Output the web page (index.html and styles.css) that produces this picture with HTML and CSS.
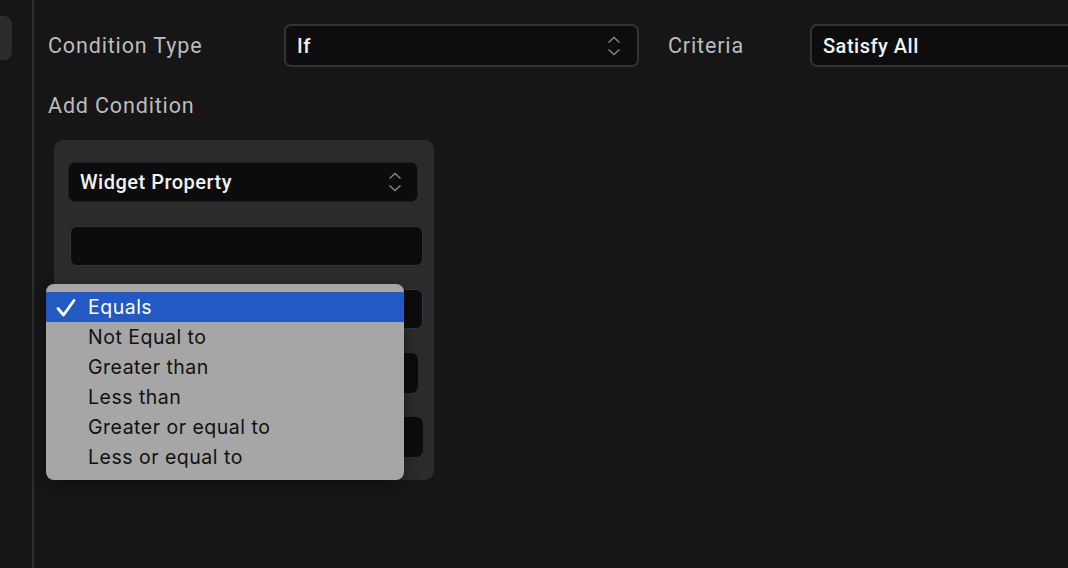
FILE: index.html
```html
<!DOCTYPE html>
<html>
<head>
<meta charset="utf-8">
<link rel="stylesheet" href="styles.css">
</head>
<body>
<div class="app">
  <aside class="sidebar">
    <div class="side-tab"></div>
  </aside>
  <main class="content">
    <div class="row">
      <span class="label label-type">Condition Type</span>
      <div class="select select-if">
        <span class="val">If</span>
        <svg class="chev" width="14" height="20" viewBox="0 0 14 20"><path d="M1.5 6.5 L7 1.5 L12.5 6.5 M1.5 13.5 L7 18.5 L12.5 13.5" fill="none" stroke="#8a8a8a" stroke-width="1.3"/></svg>
      </div>
      <span class="label label-crit">Criteria</span>
      <div class="select select-crit">
        <span class="val">Satisfy All</span>
      </div>
    </div>
    <div class="label add">Add Condition</div>
    <div class="card-wrap">
      <div class="card">
        <div class="field f1">
          <span class="val">Widget Property</span>
          <svg class="chev" width="14" height="20" viewBox="0 0 14 20"><path d="M1.5 6.5 L7 1.5 L12.5 6.5 M1.5 13.5 L7 18.5 L12.5 13.5" fill="none" stroke="#8a8a8a" stroke-width="1.3"/></svg>
        </div>
        <div class="field f2"></div>
        <div class="field f3"></div>
        <div class="field f4"></div>
        <div class="field f5"></div>
      </div>
      <ul class="menu">
        <li class="item sel"><svg class="check" width="20" height="18" viewBox="0 0 20 18"><path d="M2 9.5 L7.5 16 L18 1.5" fill="none" stroke="#fff" stroke-width="2.8" stroke-linecap="round" stroke-linejoin="round"/></svg>Equals</li>
        <li class="item">Not Equal to</li>
        <li class="item">Greater than</li>
        <li class="item">Less than</li>
        <li class="item">Greater or equal to</li>
        <li class="item">Less or equal to</li>
      </ul>
    </div>
  </main>
</div>
</body>
</html>
```
FILE: styles.css
```css
* { box-sizing: border-box; }
html, body { margin: 0; padding: 0; }
body {
  background: #161616;
  font-family: Roboto, "Liberation Sans", sans-serif;
  width: 1068px;
  height: 568px;
  overflow: hidden;
}
.app { display: flex; height: 568px; }
.sidebar {
  width: 34px;
  border-right: 2px solid #2d2d2d;
  padding-top: 16px;
  flex: none;
}
.side-tab {
  width: 12px;
  height: 44px;
  background: #2c2c2c;
  border-radius: 0 8px 8px 0;
}
.content { padding: 24px 0 0 14px; flex: 1; min-width: 0; }
.row { display: flex; align-items: center; height: 43px; }
.label { color: #bcbcbc; font-size: 21.5px; font-weight: 400; letter-spacing: 0.85px; }
.label-type { width: 236px; flex: none; }
.label-crit { width: 142px; margin-left: 29px; flex: none; }
.select {
  height: 43px;
  background: #0d0d0d;
  border: 2px solid #333;
  border-radius: 7px;
  display: flex;
  align-items: center;
  padding: 0 16px 0 11px;
  flex: none;
}
.val { color: #f2f2f2; font-size: 20px; font-weight: 500; flex: 1; letter-spacing: 0.5px; }
.select-if { width: 355px; }
.select-crit { width: 300px; }
.chev { flex: none; }
.add { margin-top: 27px; line-height: 24px; }
.card-wrap { position: relative; margin-top: 22px; margin-left: 6px; }
.card {
  width: 380px;
  height: 340px;
  background: #2b2b2b;
  border-radius: 9px;
  padding: 22px 0 0 14px;
  display: flex;
  flex-direction: column;
}
.field {
  height: 40px;
  background: #0c0c0c;
  border-radius: 7px;
  display: flex;
  align-items: center;
  padding: 0 15px 0 11px;
  flex: none;
}
.f1 { width: 350px; border: 1px solid #1e1e1e; }
.f2 { width: 353px; margin-top: 24px; margin-left: 2px; border: 1px solid #333; }
.f3 { width: 353px; margin-top: 23px; margin-left: 2px; border: 1px solid #2c3a48; }
.f4 { width: 348px; margin-top: 24px; margin-left: 2px; }
.f5 { width: 353px; margin-top: 24px; margin-left: 2px; }
.menu {
  position: absolute;
  left: -8px;
  top: 144px;
  width: 358px;
  height: 196px;
  margin: 0;
  padding: 8px 0 0;
  list-style: none;
  background: #a6a6a6;
  border-radius: 8px;
  box-shadow: 0 4px 14px rgba(0,0,0,0.35);
  font-family: Inter, Roboto, sans-serif;
}
.item {
  height: 30px;
  line-height: 30px;
  padding-left: 42px;
  font-size: 19.5px;
  letter-spacing: 0.5px;
  color: #111;
  position: relative;
}
.item.sel { background: #2359c3; color: #fff; }
.check { position: absolute; left: 10px; top: 7px; }
```
